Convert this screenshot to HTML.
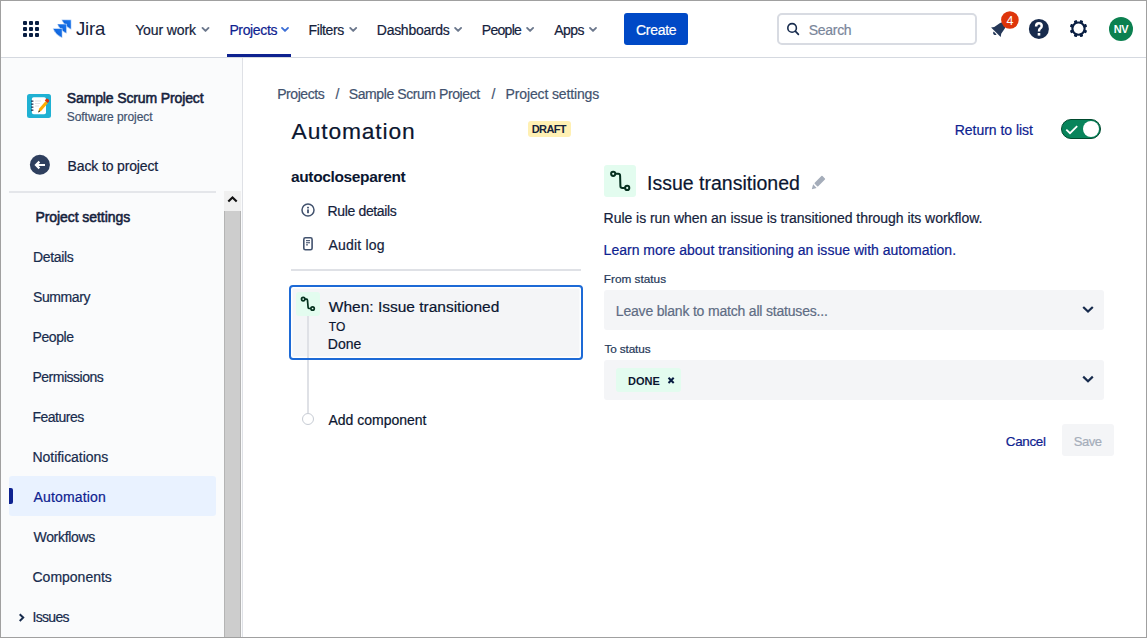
<!DOCTYPE html>
<html><head><meta charset="utf-8"><style>
html,body{margin:0;padding:0;}
body{width:1147px;height:638px;position:relative;overflow:hidden;background:#fff;font-family:"Liberation Sans",sans-serif;}
.t{position:absolute;white-space:nowrap;line-height:1;-webkit-text-stroke:0.2px currentColor;}
.a{position:absolute;}
.b{-webkit-text-stroke:0;}
#jira{font-weight:400 !important;-webkit-text-stroke:0;}
.sb{font-weight:400 !important;-webkit-text-stroke:0.55px currentColor;}
</style></head><body>
<!-- header -->
<div class="a" style="left:0;top:0;width:1147px;height:57px;background:#fff"></div>
<div class="a" style="left:0;top:57px;width:1147px;height:1px;background:#D5D9E0"></div>
<div class="a" style="left:227px;top:54px;width:64px;height:3px;background:#0E2290"></div>
<!-- grid icon -->
<svg class="a" style="left:0;top:0" width="120" height="57">
  <g fill="#091E42">
    <rect x="23" y="21" width="4" height="4" rx="1"/><rect x="29" y="21" width="4" height="4" rx="1"/><rect x="35" y="21" width="4" height="4" rx="1"/>
    <rect x="23" y="27" width="4" height="4" rx="1"/><rect x="29" y="27" width="4" height="4" rx="1"/><rect x="35" y="27" width="4" height="4" rx="1"/>
    <rect x="23" y="33" width="4" height="4" rx="1"/><rect x="29" y="33" width="4" height="4" rx="1"/><rect x="35" y="33" width="4" height="4" rx="1"/>
  </g>
  <defs><linearGradient id="jg" x1="0" y1="1" x2="1" y2="0"><stop offset="0" stop-color="#0052CC"/><stop offset="1" stop-color="#1F7AF0"/></linearGradient></defs>
  <g fill="url(#jg)" stroke="#fff" stroke-width="0.5">
    <path d="M61.6,19.8 L71.2,19.8 L71.2,29.4 Q64.5,26.5 61.6,19.8 Z"/>
    <path d="M57.2,24.1 L66.6,24.1 L66.6,33.6 Q60.1,30.8 57.2,24.1 Z"/>
    <path d="M52.8,28.4 L62.2,28.4 L62.2,37.9 Q55.7,35.1 52.8,28.4 Z"/>
  </g>
</svg>
<!-- nav chevrons -->
<svg class="a" style="left:0;top:0" width="620" height="57">
  <g fill="none" stroke="#6B778C" stroke-width="1.9" stroke-linecap="round" stroke-linejoin="round">
    <path d="M202.5,27.9 L205.5,30.9 L208.5,27.9"/>
    <path d="M282.0,27.9 L285.0,30.9 L288.0,27.9" stroke="#3D6FD6"/>
    <path d="M350.2,27.9 L353.2,30.9 L356.2,27.9"/>
    <path d="M455.1,27.9 L458.1,30.9 L461.1,27.9"/>
    <path d="M527.1,27.9 L530.1,30.9 L533.1,27.9"/>
    <path d="M590.0,27.9 L593.0,30.9 L596.0,27.9"/>
  </g>
</svg>
<!-- create button -->
<div class="a" style="left:624px;top:13px;width:64px;height:32px;background:#0049C6;border-radius:3px"></div>
<!-- search -->
<div class="a" style="left:777px;top:13px;width:196px;height:28px;border:2px solid #D8DBE2;border-radius:5px;background:#fff"></div>
<svg class="a" style="left:780px;top:18px" width="25" height="22">
  <circle cx="12.1" cy="9.9" r="4.3" fill="none" stroke="#172B4D" stroke-width="1.6"/>
  <path d="M15.3,13.1 L18.4,16.3" stroke="#172B4D" stroke-width="1.7" stroke-linecap="round"/>
</svg>
<!-- bell -->
<svg class="a" style="left:0;top:0" width="1147" height="57">
  <g transform="translate(995.9 32.2) rotate(45)" fill="#253858">
    <path d="M-6.8,0 L6.8,0 L4.9,-2.6 L3.6,-9 Q3.2,-12 0,-12 Q-3.2,-12 -3.6,-9 L-4.9,-2.6 Z"/>
    <path d="M-2,1.1 A2 2 0 0 0 2,1.1 Z"/>
  </g>
  <circle cx="1009.9" cy="20" r="8.8" fill="#DE350B"/>
  <text x="1010" y="24.5" font-family="Liberation Sans" font-size="12.5" fill="#fff" text-anchor="middle">4</text>
</svg>
<!-- help -->
<svg class="a" style="left:1025px;top:15px" width="30" height="30">
  <circle cx="13.9" cy="13.9" r="10" fill="#172B4D"/>
  <path d="M11.1,11.4 Q11.1,8.2 13.9,8.2 Q16.7,8.2 16.7,10.9 Q16.7,12.6 15,13.6 Q14,14.2 14,16.4" fill="none" stroke="#fff" stroke-width="2.5"/>
  <rect x="12.7" y="18" width="2.6" height="2.6" fill="#fff"/>
</svg>
<!-- gear -->
<svg class="a" style="left:0;top:0" width="1147" height="57">
  <g transform="translate(1078.5 28.6)" fill="#091E42">
    <circle r="6.1" fill="none" stroke="#091E42" stroke-width="2.1"/>
    <rect x="-1.6" y="-8.8" width="3.2" height="3.4" rx="0.9" transform="rotate(22.5)"/><rect x="-1.6" y="-8.8" width="3.2" height="3.4" rx="0.9" transform="rotate(67.5)"/><rect x="-1.6" y="-8.8" width="3.2" height="3.4" rx="0.9" transform="rotate(112.5)"/><rect x="-1.6" y="-8.8" width="3.2" height="3.4" rx="0.9" transform="rotate(157.5)"/><rect x="-1.6" y="-8.8" width="3.2" height="3.4" rx="0.9" transform="rotate(202.5)"/><rect x="-1.6" y="-8.8" width="3.2" height="3.4" rx="0.9" transform="rotate(247.5)"/><rect x="-1.6" y="-8.8" width="3.2" height="3.4" rx="0.9" transform="rotate(292.5)"/><rect x="-1.6" y="-8.8" width="3.2" height="3.4" rx="0.9" transform="rotate(337.5)"/>
  </g>
</svg>
<!-- avatar -->
<div class="a" style="left:1109px;top:17px;width:24px;height:24px;border-radius:50%;background:#0B8050"></div>
<span class="a" style="left:1109px;top:23.5px;width:24px;text-align:center;font:bold 11px/1 'Liberation Sans';color:#fff;letter-spacing:-0.3px">NV</span>

<!-- sidebar -->
<div class="a" style="left:0;top:58px;width:242px;height:580px;background:#FAFBFC"></div>
<div class="a" style="left:242px;top:58px;width:1px;height:580px;background:#DFE1E6"></div>
<!-- project icon -->
<svg class="a" style="left:25px;top:92px" width="28" height="28">
  <rect x="2" y="2" width="24" height="24" rx="2.5" fill="#1FB1D3"/>
  <rect x="6.9" y="5.2" width="14.1" height="17" rx="1.8" fill="#fff"/>
  <g fill="#253858"><rect x="6" y="8.5" width="2.4" height="1.3"/><rect x="6" y="11.5" width="2.4" height="1.3"/><rect x="6" y="14.5" width="2.4" height="1.3"/><rect x="6" y="17.5" width="2.4" height="1.3"/></g>
  <g fill="#DFE1E6"><rect x="10" y="8.5" width="6" height="1"/><rect x="10" y="11" width="5" height="1"/><rect x="10" y="13.5" width="4" height="1"/></g>
  <path d="M13,20.5 L14.2,16.5 L20.5,9.2 L22.8,11.2 L16.5,18.5 Z" fill="#FFAB00"/>
  <path d="M19.8,8.4 L21,7 Q22,6.2 23,7.1 L24,8 Q24.6,8.9 23.8,9.8 L22.8,11 Z" fill="#DE350B"/>
  <path d="M13,20.5 L14.2,18.3 L15.4,19.4 Z" fill="#253858"/>
</svg>
<!-- back circle -->
<svg class="a" style="left:25px;top:150px" width="30" height="30">
  <circle cx="14.9" cy="14.8" r="10" fill="#2E3F5E"/>
  <path d="M20,15 L11.2,15 M14.4,11.6 L11,15 L14.4,18.4" fill="none" stroke="#fff" stroke-width="2.2" stroke-linejoin="miter" stroke-linecap="butt"/>
</svg>
<div class="a" style="left:9px;top:191px;width:207px;height:2px;background:#E4E6EA"></div>
<!-- scrollbar -->
<div class="a" style="left:224px;top:191px;width:17px;height:447px;background:#F0F0F0"></div>
<div class="a" style="left:224px;top:211px;width:15px;height:427px;background:#CDCDCD;border-left:1px solid #B4B4B4;border-right:1px solid #B4B4B4"></div>
<svg class="a" style="left:224px;top:191px" width="17" height="20">
  <path d="M4.3,10.6 L8.5,6.4 L12.7,10.6" fill="none" stroke="#111" stroke-width="2.1"/>
</svg>
<!-- automation highlight -->
<div class="a" style="left:9px;top:476px;width:207px;height:40px;background:#E9F2FF;border-radius:3px"></div>
<div class="a" style="left:9px;top:488px;width:4px;height:16px;background:#0E2290;border-radius:0 2px 2px 0"></div>
<svg class="a" style="left:0;top:600px" width="40" height="30">
  <path d="M19.7,14.2 L23.2,17.6 L19.7,21" fill="none" stroke="#172B4D" stroke-width="2"/>
</svg>

<!-- DRAFT badge -->
<div class="a" style="left:528px;top:121px;width:43px;height:16px;background:#FFF0B3;border-radius:3px"></div>
<!-- toggle -->
<div class="a" style="left:1061px;top:119px;width:38px;height:18px;border:1px solid #004A2E;border-radius:10px;background:#08845B"></div>
<div class="a" style="left:1083px;top:121px;width:16px;height:16px;border-radius:50%;background:#fff"></div>
<svg class="a" style="left:1056px;top:114px" width="30" height="30">
  <path d="M10.3,15.6 L14,19.2 L21.2,12.2" fill="none" stroke="#fff" stroke-width="1.8"/>
</svg>
<!-- info & audit icons -->
<svg class="a" style="left:296px;top:198px" width="24" height="60">
  <circle cx="12" cy="12" r="6" fill="none" stroke="#42526E" stroke-width="1.5"/>
  <rect x="11.1" y="8.8" width="1.8" height="1.6" fill="#42526E"/>
  <rect x="11.1" y="11.4" width="1.8" height="3.8" fill="#42526E"/>
  <rect x="7.8" y="39.8" width="8.3" height="12" rx="1.6" fill="none" stroke="#42526E" stroke-width="1.6"/>
  <rect x="10" y="42.1" width="4" height="1.1" fill="#42526E"/>
  <rect x="10" y="44.2" width="4" height="1.1" fill="#42526E"/>
  <rect x="10" y="46.3" width="2" height="1.1" fill="#42526E"/>
</svg>
<!-- divider -->
<div class="a" style="left:291px;top:269px;width:290px;height:2px;background:#DFE1E6"></div>
<!-- card -->
<div class="a" style="left:289px;top:285px;width:290px;height:71px;border:2px solid #1D6AD6;border-radius:4px;background:#F4F5F7;box-shadow:inset 0 0 0 1.5px #fff"></div>
<div class="a" style="left:296px;top:292px;width:24px;height:24px;background:#E3FCEF;border-radius:3px"></div>
<div class="a" style="left:307px;top:316px;width:2px;height:42px;background:#DFE1E6"></div>
<div class="a" style="left:307px;top:360px;width:2px;height:53px;background:#DFE1E6"></div>
<div class="a" style="left:302px;top:413px;width:10px;height:10px;border:1px solid #C7CCD4;border-radius:50%;background:#fff"></div>
<svg class="a" style="left:285px;top:280px" width="60" height="40">
  <g fill="none" stroke="#06331F" stroke-width="1.7">
    <circle cx="18.2" cy="19.1" r="1.7"/>
    <circle cx="27.6" cy="28.5" r="1.7"/>
    <path d="M19.9,19.1 L21.6,19.1 Q22.4,19.2 22.5,20.3 L23.1,27.4 Q23.2,28.5 24.3,28.5 L25.9,28.5"/>
  </g>
</svg>
<!-- right icon -->
<div class="a" style="left:604px;top:165px;width:32px;height:32px;background:#E3FCEF;border-radius:3px"></div>
<svg class="a" style="left:595px;top:155px" width="50" height="50">
  <g fill="none" stroke="#06301F" stroke-width="2">
    <circle cx="18.2" cy="18.8" r="2.1"/>
    <circle cx="32.2" cy="32.9" r="2.1"/>
    <path d="M20.3,18.8 L23.3,18.8 Q25,18.8 25.1,20.6 L25.4,31.1 Q25.5,32.9 27.3,32.9 L30.1,32.9"/>
  </g>
</svg>
<!-- pencil -->
<svg class="a" style="left:804.5px;top:171.8px" width="24" height="24">
  <g transform="rotate(45 12 12)">
    <rect x="9.5" y="2.5" width="5" height="11" rx="0.8" fill="#A5ADBA"/>
    <path d="M9.5,15 L14.5,15 L12,19.3 Z" fill="#A5ADBA"/>
  </g>
</svg>
<!-- fields -->
<div class="a" style="left:604px;top:290px;width:500px;height:40px;background:#F4F5F7;border-radius:3px"></div>
<div class="a" style="left:604px;top:360px;width:500px;height:40px;background:#F4F5F7;border-radius:3px"></div>
<svg class="a" style="left:1075px;top:300px" width="25" height="90">
  <g fill="none" stroke="#172B4D" stroke-width="2.2">
    <path d="M8.2,7 L13,11.6 L17.8,7"/>
    <path d="M8.2,76.6 L13,81.2 L17.8,76.6"/>
  </g>
</svg>
<div class="a" style="left:616px;top:368px;width:65px;height:24px;background:#E3FCEF;border-radius:3px"></div>
<svg class="a" style="left:660px;top:370px" width="20" height="20">
  <path d="M8.5,7.8 L13.7,13 M13.7,7.8 L8.5,13" stroke="#091E42" stroke-width="2"/>
</svg>
<!-- save button -->
<div class="a" style="left:1062px;top:424px;width:52px;height:32px;background:#F4F5F7;border-radius:3px"></div>
<!-- outer frame -->
<div class="a" style="left:0;top:0;width:1145px;height:636px;border:1px solid #A0A0A0;z-index:10"></div>

<span class="t" id="yourwork" style="left:135.20px;top:22.75px;font-size:14px;color:#15223C;font-weight:400;letter-spacing:-0.125px">Your work</span>
<span class="t" id="projects" style="left:229.40px;top:22.75px;font-size:14px;color:#0E2290;font-weight:400;letter-spacing:-0.362px">Projects</span>
<span class="t" id="filters" style="left:308.60px;top:22.75px;font-size:14px;color:#15223C;font-weight:400;letter-spacing:-0.417px">Filters</span>
<span class="t" id="dashboards" style="left:376.80px;top:22.75px;font-size:14px;color:#15223C;font-weight:400;letter-spacing:-0.276px">Dashboards</span>
<span class="t" id="people" style="left:481.80px;top:22.75px;font-size:14px;color:#15223C;font-weight:400;letter-spacing:-0.700px">People</span>
<span class="t" id="apps" style="left:554.20px;top:22.75px;font-size:14px;color:#15223C;font-weight:400;letter-spacing:-0.501px">Apps</span>
<span class="t" id="create" style="left:636.00px;top:22.65px;font-size:14px;color:#FFFFFF;font-weight:400;letter-spacing:-0.300px">Create</span>
<span class="t" id="search" style="left:808.80px;top:22.85px;font-size:14px;color:#7A869A;font-weight:400;letter-spacing:-0.300px">Search</span>
<span class="t b" id="jira" style="left:76.00px;top:19.94px;font-size:18.5px;color:#15223C;font-weight:700;letter-spacing:-0.168px">Jira</span>
<span class="t sb" id="ssp" style="left:66.80px;top:91.15px;font-size:14px;color:#15223C;font-weight:600;letter-spacing:-0.131px">Sample Scrum Project</span>
<span class="t" id="swp" style="left:66.80px;top:110.64px;font-size:12px;color:#42526E;font-weight:400;letter-spacing:-0.065px">Software project</span>
<span class="t" id="back" style="left:67.60px;top:158.75px;font-size:14px;color:#15223C;font-weight:400;letter-spacing:-0.143px">Back to project</span>
<span class="t sb" id="psettings" style="left:35.40px;top:209.85px;font-size:14px;color:#15223C;font-weight:600;letter-spacing:-0.065px">Project settings</span>
<span class="t" id="side_Details" style="left:33.00px;top:249.85px;font-size:14px;color:#172B4D;font-weight:400;letter-spacing:-0.334px">Details</span>
<span class="t" id="side_Summary" style="left:33.00px;top:289.85px;font-size:14px;color:#172B4D;font-weight:400;letter-spacing:-0.416px">Summary</span>
<span class="t" id="side_People" style="left:32.50px;top:329.85px;font-size:14px;color:#172B4D;font-weight:400;letter-spacing:-0.400px">People</span>
<span class="t" id="side_Permissions" style="left:32.50px;top:369.85px;font-size:14px;color:#172B4D;font-weight:400;letter-spacing:-0.500px">Permissions</span>
<span class="t" id="side_Features" style="left:32.50px;top:409.85px;font-size:14px;color:#172B4D;font-weight:400;letter-spacing:-0.504px">Features</span>
<span class="t" id="side_Notifications" style="left:32.50px;top:449.85px;font-size:14px;color:#172B4D;font-weight:400;letter-spacing:-0.040px">Notifications</span>
<span class="t" id="side_Automation" style="left:33.50px;top:489.85px;font-size:14px;color:#0E2290;font-weight:400;letter-spacing:0.163px">Automation</span>
<span class="t" id="side_Workflows" style="left:33.50px;top:529.85px;font-size:14px;color:#172B4D;font-weight:400;letter-spacing:-0.320px">Workflows</span>
<span class="t" id="side_Components" style="left:32.50px;top:569.85px;font-size:14px;color:#172B4D;font-weight:400;letter-spacing:-0.003px">Components</span>
<span class="t" id="side_Issues" style="left:32.50px;top:609.85px;font-size:14px;color:#172B4D;font-weight:400;letter-spacing:-0.700px">Issues</span>
<span class="t" id="bc1" style="left:277.20px;top:86.95px;font-size:14px;color:#42526E;font-weight:400;letter-spacing:-0.432px">Projects</span>
<span class="t" id="bcs1" style="left:335.40px;top:86.95px;font-size:14px;color:#42526E;font-weight:400;letter-spacing:0.000px">/</span>
<span class="t" id="bc2" style="left:348.80px;top:86.95px;font-size:14px;color:#42526E;font-weight:400;letter-spacing:-0.417px">Sample Scrum Project</span>
<span class="t" id="bcs2" style="left:491.40px;top:86.95px;font-size:14px;color:#42526E;font-weight:400;letter-spacing:0.000px">/</span>
<span class="t" id="bc3" style="left:505.60px;top:86.95px;font-size:14px;color:#42526E;font-weight:400;letter-spacing:-0.136px">Project settings</span>
<span class="t" id="title" style="left:291.60px;top:120.30px;font-size:22.8px;color:#0B1630;font-weight:400;letter-spacing:0.861px">Automation</span>
<span class="t b" id="draft" style="left:531.80px;top:124.29px;font-size:11px;color:#15223C;font-weight:700;letter-spacing:-0.625px">DRAFT</span>
<span class="t" id="retlist" style="left:954.80px;top:122.65px;font-size:14px;color:#0E2290;font-weight:400;letter-spacing:-0.037px">Return to list</span>
<span class="t b" id="rulename" style="left:291.00px;top:169.38px;font-size:15.5px;color:#0B1630;font-weight:700;letter-spacing:-0.360px">autocloseparent</span>
<span class="t" id="ruledetails" style="left:327.60px;top:203.65px;font-size:14px;color:#15223C;font-weight:400;letter-spacing:-0.364px">Rule details</span>
<span class="t" id="auditlog" style="left:328.60px;top:238.15px;font-size:14px;color:#15223C;font-weight:400;letter-spacing:0.180px">Audit log</span>
<span class="t" id="when" style="left:328.80px;top:299.28px;font-size:15.5px;color:#0B1630;font-weight:400;letter-spacing:-0.003px">When: Issue transitioned</span>
<span class="t" id="to" style="left:328.80px;top:320.84px;font-size:12px;color:#0B1630;font-weight:400;letter-spacing:0.000px">TO</span>
<span class="t" id="done" style="left:327.80px;top:336.65px;font-size:14px;color:#0B1630;font-weight:400;letter-spacing:0.003px">Done</span>
<span class="t" id="addcomp" style="left:328.40px;top:412.75px;font-size:14px;color:#0B1630;font-weight:400;letter-spacing:-0.000px">Add component</span>
<span class="t" id="issuetr" style="left:647.00px;top:173.79px;font-size:19.5px;color:#0B1630;font-weight:400;letter-spacing:0.000px">Issue transitioned</span>
<span class="t" id="rulerun" style="left:603.60px;top:210.75px;font-size:14px;color:#15223C;font-weight:400;letter-spacing:-0.041px">Rule is run when an issue is transitioned through its workflow.</span>
<span class="t" id="learn" style="left:603.60px;top:242.95px;font-size:14px;color:#0E2290;font-weight:400;letter-spacing:0.012px">Learn more about transitioning an issue with automation.</span>
<span class="t" id="fromst" style="left:603.80px;top:273.71px;font-size:11.8px;color:#253858;font-weight:400;letter-spacing:0.000px">From status</span>
<span class="t" id="leave" style="left:615.80px;top:304.15px;font-size:14px;color:#5E6C84;font-weight:400;letter-spacing:-0.189px">Leave blank to match all statuses...</span>
<span class="t" id="tost" style="left:604.40px;top:343.71px;font-size:11.8px;color:#253858;font-weight:400;letter-spacing:-0.125px">To status</span>
<span class="t b" id="donechip" style="left:628.00px;top:376.49px;font-size:11px;color:#0B1630;font-weight:700;letter-spacing:0.003px">DONE</span>
<span class="t" id="cancel" style="left:1005.80px;top:435.26px;font-size:13.4px;color:#0E2290;font-weight:400;letter-spacing:-0.300px">Cancel</span>
<span class="t" id="save" style="left:1073.80px;top:434.60px;font-size:13px;color:#A5ADBA;font-weight:400;letter-spacing:-0.501px">Save</span>
</body></html>
